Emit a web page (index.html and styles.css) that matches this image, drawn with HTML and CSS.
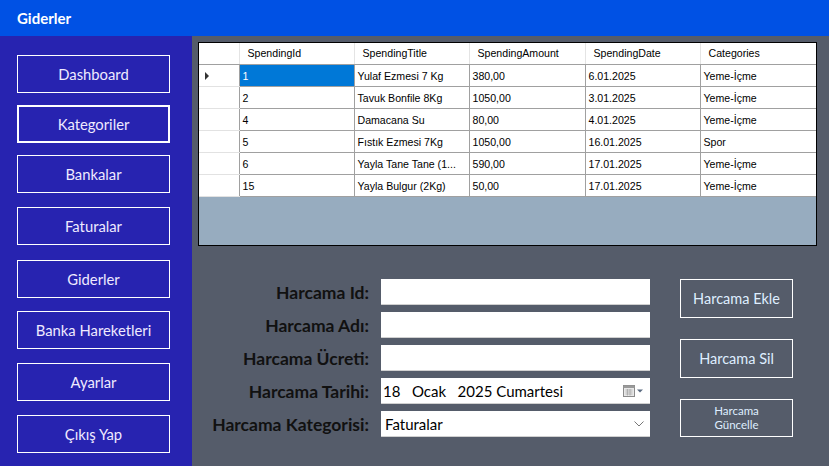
FILE: index.html
```html
<!DOCTYPE html>
<html lang="tr">
<head>
<meta charset="utf-8">
<title>Giderler</title>
<link rel="stylesheet" href="styles.css">
</head>
<body>
<div class="window">
  <header class="titlebar">Giderler</header>
  <div class="main">
    <nav class="sidebar">
      <button class="nav-btn">Dashboard</button>
      <button class="nav-btn active">Kategoriler</button>
      <button class="nav-btn">Bankalar</button>
      <button class="nav-btn">Faturalar</button>
      <button class="nav-btn">Giderler</button>
      <button class="nav-btn">Banka Hareketleri</button>
      <button class="nav-btn">Ayarlar</button>
      <button class="nav-btn">Çıkış Yap</button>
    </nav>
    <section class="content">
      <div class="datagrid">
        <table class="grid-table">
          <colgroup>
            <col class="c-rh"><col class="c-id"><col class="c-title"><col class="c-amount"><col class="c-date"><col class="c-cat">
          </colgroup>
          <thead>
            <tr>
              <th class="rowhead"></th>
              <th>SpendingId</th>
              <th>SpendingTitle</th>
              <th>SpendingAmount</th>
              <th>SpendingDate</th>
              <th>Categories</th>
            </tr>
          </thead>
          <tbody>
            <tr>
              <td class="rowhead"><span class="current-arrow"></span></td>
              <td class="selected">1</td><td>Yulaf Ezmesi 7 Kg</td><td>380,00</td><td>6.01.2025</td><td>Yeme-İçme</td>
            </tr>
            <tr>
              <td class="rowhead"></td>
              <td>2</td><td>Tavuk Bonfile 8Kg</td><td>1050,00</td><td>3.01.2025</td><td>Yeme-İçme</td>
            </tr>
            <tr>
              <td class="rowhead"></td>
              <td>4</td><td>Damacana Su</td><td>80,00</td><td>4.01.2025</td><td>Yeme-İçme</td>
            </tr>
            <tr>
              <td class="rowhead"></td>
              <td>5</td><td>Fıstık Ezmesi 7Kg</td><td>1050,00</td><td>16.01.2025</td><td>Spor</td>
            </tr>
            <tr>
              <td class="rowhead"></td>
              <td>6</td><td>Yayla Tane Tane (1...</td><td>590,00</td><td>17.01.2025</td><td>Yeme-İçme</td>
            </tr>
            <tr>
              <td class="rowhead"></td>
              <td>15</td><td>Yayla Bulgur (2Kg)</td><td>50,00</td><td>17.01.2025</td><td>Yeme-İçme</td>
            </tr>
          </tbody>
        </table>
      </div>

      <div class="form-area">
        <div class="form">
          <label class="form-label">Harcama Id:</label>
          <div class="field"></div>
          <label class="form-label">Harcama Adı:</label>
          <div class="field"></div>
          <label class="form-label">Harcama Ücreti:</label>
          <div class="field"></div>
          <label class="form-label">Harcama Tarihi:</label>
          <div class="field picker">
            <span class="picker-text">18   Ocak   2025 Cumartesi</span>
            <svg class="cal-icon" width="22" height="14" viewBox="0 0 22 14">
              <rect x="1.5" y="1.5" width="11" height="11" fill="#e8e8e8" stroke="#8a8a8a"/>
              <rect x="1.5" y="1.5" width="11" height="2.5" fill="#9a9a9a"/>
              <path d="M3.5 6h7M3.5 8h7M3.5 10h7M5.5 5v6.5M8 5v6.5" stroke="#a8a8a8" stroke-width="0.8"/>
              <path d="M15 5.5h6l-3 3z" fill="#5a6a80"/>
            </svg>
          </div>
          <label class="form-label">Harcama Kategorisi:</label>
          <div class="field combo">
            <span class="combo-text">Faturalar</span>
            <svg class="chev" width="10" height="6" viewBox="0 0 10 6">
              <path d="M0.5 0.5l4.5 4.5l4.5-4.5" fill="none" stroke="#777" stroke-width="1"/>
            </svg>
          </div>
        </div>
        <div class="actions">
          <button class="act-btn">Harcama Ekle</button>
          <button class="act-btn">Harcama Sil</button>
          <button class="act-btn small">Harcama<br>Güncelle</button>
        </div>
      </div>
    </section>
  </div>
</div>
</body>
</html>
```

FILE: styles.css
```css
* { box-sizing: border-box; }

html, body {
  margin: 0;
  padding: 0;
  width: 829px;
  height: 466px;
  overflow: hidden;
}

.window {
  width: 829px;
  height: 466px;
  display: flex;
  flex-direction: column;
  font-family: Lato, "Noto Sans", sans-serif;
}

.titlebar {
  height: 36px;
  flex: none;
  background: #0051e4;
  color: #ffffff;
  font-weight: 700;
  font-size: 15px;
  padding-left: 17px;
  display: flex;
  align-items: center;
}

.main {
  flex: 1;
  display: flex;
  min-height: 0;
}

.sidebar {
  width: 192px;
  flex: none;
  background: #2723b0;
  padding: 19px 0 0 17px;
  display: flex;
  flex-direction: column;
  gap: 12px;
}

.nav-btn {
  width: 153px;
  height: 38px;
  flex: none;
  background: transparent;
  border: 1px solid #ffffff;
  color: #efeaff;
  font-family: Lato, "Noto Sans", sans-serif;
  font-size: 14.8px;
  padding: 0;
}

.nav-btn.active {
  border-width: 2px;
}

.nav-btn:nth-child(4) { margin-top: 2px; }
.nav-btn:nth-child(5) { margin-top: 3px; }
.nav-btn:nth-child(6) { margin-top: 1px; }
.nav-btn:nth-child(7) { margin-top: 2px; }
.nav-btn:nth-child(8) { margin-top: 2px; }

.content {
  flex: 1;
  background: #555c6a;
  padding: 6px 0 0 6px;
}

.datagrid {
  width: 619px;
  height: 204px;
  border: 1px solid #000000;
  background: #97acbf;
  overflow: hidden;
}

.grid-table {
  border-collapse: collapse;
  table-layout: fixed;
  width: 617px;
  font-family: "Liberation Sans", Arial, sans-serif;
  font-size: 10.6px;
  color: #000;
}

.c-rh { width: 40px; }
.c-id { width: 115px; }
.c-title { width: 115px; }
.c-amount { width: 116px; }
.c-date { width: 115px; }
.c-cat { width: 116px; }

.grid-table th {
  height: 21px;
  background: #ffffff;
  font-weight: 400;
  text-align: left;
  padding: 0 0 0 8px;
  border-right: 1px solid #e4e4e4;
  border-bottom: 1px solid #a0a0a0;
  white-space: nowrap;
  overflow: hidden;
}

.grid-table td {
  height: 22px;
  background: #ffffff;
  padding: 1px 0 0 3px;
  border-right: 1px solid #a0a0a0;
  border-bottom: 1px solid #a0a0a0;
  white-space: nowrap;
  overflow: hidden;
}

.grid-table .rowhead {
  padding: 0;
  border-bottom-color: #e2e2e2;
  border-right: 1px solid #a0a0a0;
  position: relative;
}

.grid-table th.rowhead {
  border-right-color: #e4e4e4;
  border-bottom-color: #a0a0a0;
}

.current-arrow {
  position: absolute;
  left: 6px;
  top: 7px;
  width: 0;
  height: 0;
  border-top: 4px solid transparent;
  border-bottom: 4px solid transparent;
  border-left: 4px solid #333;
}

.grid-table td.selected {
  background: #0078d7;
  color: #ffffff;
}

.form-area {
  display: flex;
  margin-top: 33px;
}

.form {
  display: grid;
  grid-template-columns: 171px 269px;
  grid-auto-rows: 26px;
  column-gap: 12px;
  row-gap: 7px;
}

.form-label {
  justify-self: end;
  align-self: center;
  font-family: Lato, "Noto Sans", sans-serif;
  font-weight: 700;
  font-size: 17.5px;
  color: #111111;
  white-space: nowrap;
}

.field {
  background: #ffffff;
  border-bottom: 1px solid #d0d0d0;
  display: flex;
  align-items: center;
  font-family: Lato, "Noto Sans", sans-serif;
  font-size: 15px;
  color: #000;
}

.picker {
  padding-left: 2px;
}

.picker-text {
  white-space: pre;
  flex: 1;
}

.cal-icon {
  margin-right: 6px;
}

.combo {
  padding-left: 4px;
}

.combo-text {
  flex: 1;
}

.chev {
  margin-right: 6px;
}

.actions {
  margin-left: 30px;
  display: flex;
  flex-direction: column;
  gap: 21px;
}

.act-btn {
  width: 113px;
  height: 39px;
  flex: none;
  background: transparent;
  border: 1px solid #ffffff;
  color: #dfeeff;
  font-family: Lato, "Noto Sans", sans-serif;
  font-size: 14.5px;
  padding: 0;
}

.act-btn.small {
  height: 38px;
  font-size: 11.5px;
  line-height: 1.2;
}
```
